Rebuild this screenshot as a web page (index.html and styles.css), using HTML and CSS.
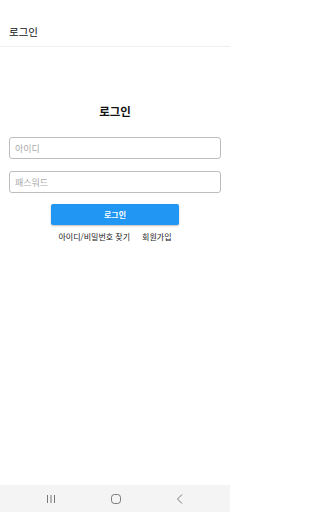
FILE: index.html
```html
<!DOCTYPE html>
<html lang="ko">
<head>
<meta charset="utf-8">
<link rel="stylesheet" href="styles.css">
</head>
<body>
<div class="screen">
  <header class="appbar"><span class="appbar-title">로그인</span></header>
  <main class="content">
    <h1 class="title">로그인</h1>
    <div class="field"><span class="placeholder">아이디</span></div>
    <div class="field field-second"><span class="placeholder">패스워드</span></div>
    <button class="login-btn">로그인</button>
    <div class="links">
      <span class="link">아이디/비밀번호 찾기</span>
      <span class="link">회원가입</span>
    </div>
  </main>
  <nav class="navbar">
    <svg class="nav-icon" width="12" height="12" viewBox="0 0 12 12"><path d="M2.5 2v8M6 2v8M9.5 2v8" stroke="#777" stroke-width="1" fill="none"/></svg>
    <svg class="nav-icon" width="12" height="12" viewBox="0 0 12 12"><rect x="1.5" y="1.5" width="9" height="9" rx="3" stroke="#777" stroke-width="1" fill="none"/></svg>
    <svg class="nav-icon" width="12" height="12" viewBox="0 0 12 12"><path d="M8 1.5L3.5 6L8 10.5" stroke="#777" stroke-width="1" fill="none"/></svg>
  </nav>
</div>
</body>
</html>
```
FILE: styles.css
```css
html, body {
  margin: 0;
  padding: 0;
  background: #fff;
}
body {
  font-family: "Noto Sans CJK KR", "Noto Sans", sans-serif;
  color: #111;
}
.screen {
  width: 230px;
  height: 512px;
  display: flex;
  flex-direction: column;
}
.appbar {
  height: 47px;
  box-sizing: border-box;
  padding: 19px 0 0 9px;
  border-bottom: 1px solid #efefef;
}
.appbar-title {
  font-size: 10.5px;
  line-height: 26px;
  display: block;
}
.content {
  flex: 1;
  display: flex;
  flex-direction: column;
  align-items: center;
}
.title {
  margin: 56px 0 0;
  font-size: 11.5px;
  font-weight: 700;
  line-height: 16px;
}
.field {
  margin-top: 18px;
  width: 212px;
  height: 22px;
  box-sizing: border-box;
  border: 1px solid #bdbdbd;
  border-radius: 3px;
  padding-left: 5px;
  display: flex;
  align-items: center;
}
.field-second {
  margin-top: 12px;
}
.placeholder {
  font-size: 9px;
  color: #aaa;
}
.login-btn {
  margin-top: 11px;
  width: 128px;
  height: 21px;
  border: none;
  border-radius: 2px;
  background: #2196f3;
  color: #fff;
  font-family: inherit;
  font-size: 8px;
  font-weight: 700;
  box-shadow: 0 1px 2px rgba(0,0,0,0.25);
  padding: 0;
}
.links {
  margin-top: 6px;
  display: flex;
  gap: 12px;
  font-size: 8px;
  line-height: 12px;
  color: #222;
}
.navbar {
  height: 27px;
  background: #f4f4f4;
  display: flex;
  justify-content: space-between;
  align-items: center;
  padding: 0 44px 0 45px;
}
.nav-icon {
  display: block;
}
```
